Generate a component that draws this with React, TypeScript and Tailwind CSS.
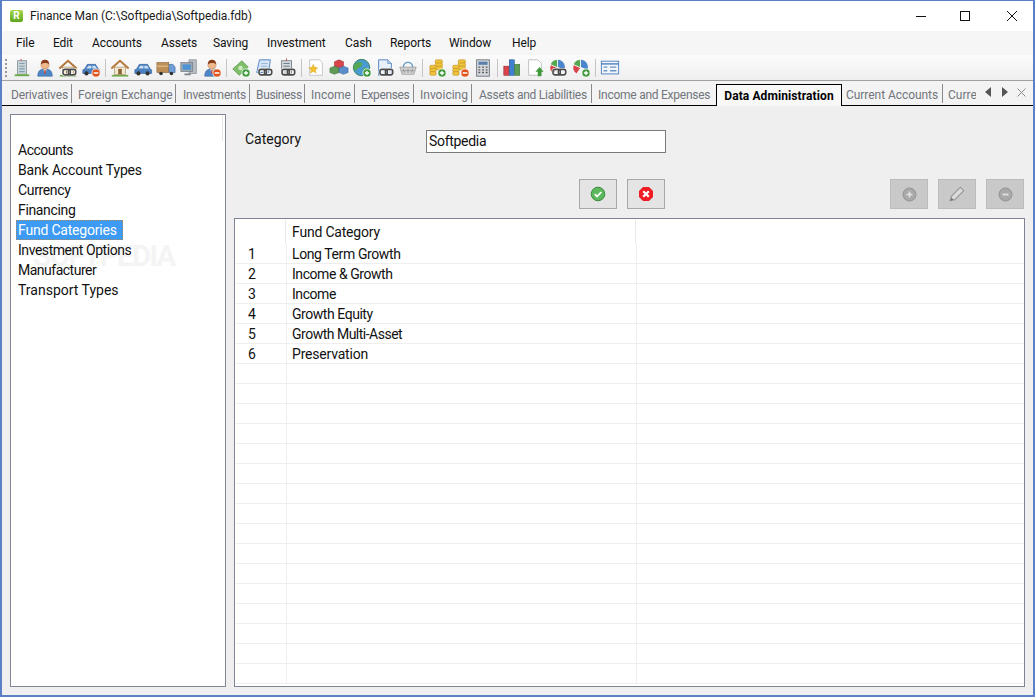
import React from "react";

const font = "font-['Roboto','Liberation_Sans',sans-serif]";

const menus = [
  { label: "File", w: "w-[37px]" },
  { label: "Edit", w: "w-[39px]" },
  { label: "Accounts", w: "w-[69px]" },
  { label: "Assets", w: "w-[52px]" },
  { label: "Saving", w: "w-[54px]" },
  { label: "Investment", w: "w-[78px]" },
  { label: "Cash", w: "w-[45px]" },
  { label: "Reports", w: "w-[59px]" },
  { label: "Window", w: "w-[63px]" },
  { label: "Help", w: "w-[40px]" },
];

const tabs = [
  { label: "Derivatives", w: "w-[67px] tracking-[-0.15px]" },
  { label: "Foreign Exchange", w: "w-[104px]" },
  { label: "Investments", w: "w-[74px] pl-[7px] tracking-[-0.25px]" },
  { label: "Business", w: "w-[55px] tracking-[-0.35px]" },
  { label: "Income", w: "w-[50px]" },
  { label: "Expenses", w: "w-[59px] tracking-[-0.35px]" },
  { label: "Invoicing", w: "w-[58px]" },
  { label: "Assets and Liabilities", w: "w-[120px] pl-[7px] tracking-[-0.25px]" },
];

const lists = [
  { label: "Accounts", t: "tracking-[-0.5px]" },
  { label: "Bank Account Types", t: "tracking-[-0.15px]" },
  { label: "Currency", t: "tracking-[-0.35px]" },
  { label: "Financing", t: "tracking-[-0.35px]" },
  { label: "Fund Categories", t: "tracking-[-0.2px]" },
  { label: "Investment Options", t: "tracking-[-0.45px]" },
  { label: "Manufacturer", t: "tracking-[-0.5px]" },
  { label: "Transport Types", t: "tracking-[0px]" },
];

const funds = [
  { label: "Long Term Growth", t: "tracking-[-0.4px]" },
  { label: "Income & Growth", t: "tracking-[-0.45px]" },
  { label: "Income", t: "tracking-[-0.45px]" },
  { label: "Growth Equity", t: "tracking-[-0.45px]" },
  { label: "Growth Multi-Asset", t: "tracking-[-0.5px]" },
  { label: "Preservation", t: "tracking-[-0.2px]" },
];

const rows = Array.from({ length: 22 }, (_, i) => i);

// little overlays used on the toolbar icons
function Plus() {
  return (
    <g>
      <circle cx="16.5" cy="16.5" r="4.5" fill="#3f9a3c" stroke="#fff" strokeWidth="0.8" />
      <path d="M14.2 16.5h4.6M16.5 14.2v4.6" stroke="#fff" strokeWidth="1.5" />
    </g>
  );
}

function Minus() {
  return (
    <g>
      <circle cx="16.5" cy="16.5" r="4.5" fill="#e2521a" stroke="#fff" strokeWidth="0.8" />
      <path d="M14 16.5h5" stroke="#fff" strokeWidth="1.7" />
    </g>
  );
}

function Chain() {
  return (
    <g fill="none">
      <rect x="5.5" y="12.5" width="8" height="6" rx="2.2" stroke="#fff" strokeWidth="3" />
      <rect x="11.5" y="12.5" width="8" height="6" rx="2.2" stroke="#fff" strokeWidth="3" />
      <rect x="5.5" y="12.5" width="8" height="6" rx="2.2" stroke="#4a4a4a" strokeWidth="1.8" />
      <rect x="11.5" y="12.5" width="8" height="6" rx="2.2" stroke="#4a4a4a" strokeWidth="1.8" />
    </g>
  );
}

function Building() {
  return (
    <g>
      <rect x="6" y="3" width="10" height="15" fill="#ccd6d8" stroke="#8b989b" />
      <path d="M8 6h6M8 9h6M8 12h6M8 15h6" stroke="#7d9db0" strokeWidth="1.2" />
      <path d="M10 3V1" stroke="#b44" />
      <path d="M3 19h16" stroke="#6aaa48" strokeWidth="2" />
    </g>
  );
}

function Person() {
  return (
    <g>
      <path d="M3 20c0-6 3-8 8-8s8 2 8 8z" fill="#4d86c8" stroke="#2d5a94" strokeWidth="0.6" />
      <path d="M9 12l2 5 2-5z" fill="#f0e6d8" />
      <path d="M10.400 13h1.200l.5 4h-2.200z" fill="#c0452a" />
      <circle cx="11" cy="7.5" r="4.5" fill="#eeb78c" stroke="#a9724a" strokeWidth="0.5" />
      <path d="M6.600 7c0-4 2-5 4.400-5s4.400 1 4.400 5c-2-2-6-2-8.800 0z" fill="#8a3d1d" />
    </g>
  );
}

function House() {
  return (
    <g>
      <rect x="5" y="10" width="12" height="8" fill="#f2e7cf" stroke="#a68a5b" strokeWidth="0.7" />
      <path d="M1.500 11.500L11 3l9.500 8.500" fill="none" stroke="#b5773a" strokeWidth="2.200" />
      <rect x="9" y="12" width="4" height="6" fill="#8a6236" />
      <path d="M2 19.500h18" stroke="#6aaa48" strokeWidth="1.800" />
    </g>
  );
}

function Car() {
  return (
    <g>
      <path d="M2 13l2-1 3-5h9l3 5 1.500 1v4h-18.500z" fill="#4a7fc0" stroke="#2d5a94" strokeWidth="0.6" />
      <path d="M8 8.500h3.500v3H6zM12.500 8.500H15.500l2 3h-5z" fill="#c9e0f2" />
      <circle cx="6" cy="17" r="2.300" fill="#333" />
      <circle cx="16" cy="17" r="2.300" fill="#333" />
    </g>
  );
}

function Truck() {
  return (
    <g>
      <rect x="1" y="5" width="13" height="11" fill="#bd8f57" stroke="#7d5c33" strokeWidth="0.6" />
      <path d="M1 9h13" stroke="#e0bd8b" strokeWidth="1.400" />
      <path d="M14.500 7h4l2.500 3v6h-6.500z" fill="#6f9fd4" stroke="#2d5a94" strokeWidth="0.6" />
      <circle cx="5.500" cy="17" r="2" fill="#333" />
      <circle cx="17" cy="17" r="2" fill="#333" />
    </g>
  );
}

function Computer() {
  return (
    <g>
      <rect x="11" y="2" width="8" height="15" fill="#b6bcc2" stroke="#7c848c" strokeWidth="0.7" />
      <rect x="2" y="5" width="13" height="10" fill="#9fa8b0" stroke="#6c747c" strokeWidth="0.7" />
      <rect x="4" y="7" width="9" height="6" fill="#4e94d4" />
      <path d="M6 18h7" stroke="#7c848c" strokeWidth="2" />
    </g>
  );
}

function Money() {
  return (
    <g>
      <path d="M2 12L12 3l7 7-10 9z" fill="#7fbf6a" stroke="#4a8c3c" strokeWidth="0.7" />
      <circle cx="10.500" cy="11" r="2.500" fill="#cfe9c0" />
    </g>
  );
}

function Scroll() {
  return (
    <g>
      <path d="M6 2h12l-2 14H3z" fill="#d6e6f6" stroke="#4a7fc0" />
      <path d="M8 6h7M7.500 9h7" stroke="#8fb2d8" />
    </g>
  );
}

function Form() {
  return (
    <g>
      <rect x="5" y="3" width="11" height="14" fill="#d5dade" stroke="#7c848c" />
      <path d="M7 6h7M7 9h7M7 12h7" stroke="#5e7284" />
      <path d="M10.500 3V0.500" stroke="#b44" />
    </g>
  );
}

function Note() {
  return (
    <g>
      <path d="M4 2h11l3 3v14H4z" fill="#fff" stroke="#c4c4c4" />
      <path d="M8 7l1.500 3.300 3.500.4-2.600 2.400.7 3.500L8 14.800 4.900 16.600l.7-3.500L3 10.700l3.500-.4z" fill="#f2c12e" stroke="#c8961a" strokeWidth="0.4" />
    </g>
  );
}

function Cubes() {
  return (
    <g>
      <path d="M11 2l5 2v5l-5 2-5-2V4z" fill="#d9434a" stroke="#8e2229" strokeWidth="0.5" />
      <path d="M6 9l5 2v5l-5 2-5-2v-5z" fill="#5f9a57" stroke="#376b31" strokeWidth="0.5" />
      <path d="M16 9l5 2v5l-5 2-5-2v-5z" fill="#5a8ecb" stroke="#2d5a94" strokeWidth="0.5" />
    </g>
  );
}

function Globe() {
  return (
    <g>
      <circle cx="10.500" cy="10.500" r="9" fill="#4b9bd1" stroke="#2f7f4f" />
      <path d="M4 6c3-2 6-2 7 0s-2 4-4 5-2 4-4 2-1-5 1-7zM13 11c2-1 4 0 4 2s-2 3-3 3-2-4-1-5z" fill="#54a84f" />
    </g>
  );
}

function Doc() {
  return (
    <g>
      <path d="M4 2h10l4 4v13H4z" fill="#e8f0fa" stroke="#4a7fc0" />
      <path d="M14 2v4h4" fill="#bcd3ec" stroke="#4a7fc0" strokeWidth="0.7" />
    </g>
  );
}

function Basket() {
  return (
    <g>
      <path d="M6 10c0-7 10-7 10 0" fill="none" stroke="#5c9dc4" strokeWidth="1.500" />
      <path d="M2 10h18l-2.500 8h-13z" fill="#d2d2d2" stroke="#8d8d8d" strokeWidth="0.7" />
      <path d="M6 11.500l1 5M11 11.500v5M16 11.500l-1 5M4 14h14" stroke="#8d8d8d" strokeWidth="0.8" />
    </g>
  );
}

function Coins() {
  return (
    <g fill="#f0c33c" stroke="#b98a1a" strokeWidth="0.6">
      <rect x="9" y="2" width="8" height="4" rx="1.500" />
      <rect x="9" y="5.500" width="8" height="4" rx="1.500" />
      <rect x="9" y="9" width="8" height="4" rx="1.500" />
      <rect x="3" y="8" width="7" height="4" rx="1.500" />
      <rect x="3" y="11.500" width="7" height="4" rx="1.500" />
      <rect x="3" y="15" width="7" height="4" rx="1.500" />
    </g>
  );
}

function Calculator() {
  return (
    <g>
      <rect x="4" y="2" width="14" height="18" fill="#d5d8dc" stroke="#6c747c" />
      <rect x="6" y="4" width="10" height="3.500" fill="#5a7fae" />
      <path d="M6 10h2M10 10h2M14 10h2M6 13h2M10 13h2M14 13h2M6 16h2M10 16h2M14 16h2" stroke="#555" strokeWidth="1.500" />
    </g>
  );
}

function Bars() {
  return (
    <g>
      <rect x="2" y="9" width="5.500" height="10" fill="#d9434a" stroke="#8e2229" strokeWidth="0.6" />
      <rect x="8" y="2" width="5.500" height="17" fill="#3f7fd0" stroke="#234f8e" strokeWidth="0.6" />
      <rect x="14" y="7" width="5.500" height="12" fill="#5a9e55" stroke="#376b31" strokeWidth="0.6" />
    </g>
  );
}

function DocUp() {
  return (
    <g>
      <path d="M4 2h10l4 4v13H4z" fill="#fff" stroke="#bdbdbd" />
      <path d="M16 10l4.500 5H18v5h-4v-5h-2.500z" fill="#3f9a3c" />
    </g>
  );
}

function Pie() {
  return (
    <g>
      <path d="M10 10L3 7a8 8 0 0 1 7-5z" fill="#54a84f" />
      <path d="M11 10V2a8 8 0 0 1 7 11z" fill="#4a86cc" />
      <path d="M10 11l-7-3a8 8 0 0 0 3 9z" fill="#d9434a" />
    </g>
  );
}

function Panel() {
  return (
    <g>
      <rect x="1.500" y="3.500" width="19" height="14" fill="#f2f6fb" stroke="#4a7fc0" />
      <path d="M1.500 6.500h19" stroke="#4a7fc0" strokeWidth="1.500" />
      <path d="M4 10h4M4 14h4M11 10h7M11 14h7" stroke="#6a94c8" strokeWidth="1.500" />
    </g>
  );
}

function Ico({ children }: { children: React.ReactNode }) {
  return (
    <div className="w-[23px] flex items-center justify-center">
      <svg width="20" height="20" viewBox="0 0 22 22">
        {children}
      </svg>
    </div>
  );
}

function Sep() {
  return (
    <div className="w-[6px] flex justify-center">
      <div className="w-px h-[18px] bg-[#c4c4c4]" />
    </div>
  );
}

function Toolbar() {
  return (
    <div className="h-[26px] shrink-0 border-b border-[#a0a0a0] bg-gradient-to-b from-[#fbfbfb] to-[#efefef] flex items-center">
      <div className="w-[5px] h-[18px] border-l-2 border-dotted border-[#9a9a9a] ml-[3px]" />
      <Ico><Building /></Ico>
      <Ico><Person /></Ico>
      <Ico><House /><Chain /></Ico>
      <Ico><Car /><Minus /></Ico>
      <Sep />
      <Ico><House /></Ico>
      <Ico><Car /></Ico>
      <Ico><Truck /></Ico>
      <Ico><Computer /></Ico>
      <Ico><Person /><Minus /></Ico>
      <Sep />
      <Ico><Money /><Plus /></Ico>
      <Ico><Scroll /><Chain /></Ico>
      <Ico><Form /><Chain /></Ico>
      <Sep />
      <Ico><Note /></Ico>
      <Ico><Cubes /></Ico>
      <Ico><Globe /><Plus /></Ico>
      <Ico><Doc /><Chain /></Ico>
      <Ico><Basket /></Ico>
      <Sep />
      <Ico><Coins /><Plus /></Ico>
      <Ico><Coins /><Minus /></Ico>
      <Ico><Calculator /></Ico>
      <Sep />
      <Ico><Bars /></Ico>
      <Ico><DocUp /></Ico>
      <Ico><Pie /><Chain /></Ico>
      <Ico><Pie /><Plus /></Ico>
      <Sep />
      <Ico><Panel /></Ico>
    </div>
  );
}

function TabBar() {
  return (
    <div className="h-[25px] shrink-0 border-b border-black bg-[#f3f3f3] flex text-[12px] text-[#71757c] pl-[3px] relative">
      {tabs.map((t) => (
        <div key={t.label} className={`${t.w} h-[19px] mt-[3px] pt-[3px] border-r border-[#8a8a8a] pl-[6px] flex items-center whitespace-nowrap`}>
          {t.label}
        </div>
      ))}
      <div className="w-[124px] h-[19px] mt-[3px] pt-[3px] pl-[6px] flex items-center whitespace-nowrap tracking-[-0.25px]">Income and Expenses</div>
      <div className="w-[126px] h-[22px] mt-[3px] -mb-px bg-[#f8f8f8] border border-b-0 border-black flex items-center justify-center font-bold text-black whitespace-nowrap tracking-[0.1px] z-10">
        Data Administration
      </div>
      <div className="w-[101px] h-[19px] mt-[3px] pt-[3px] border-r border-[#8a8a8a] pl-[4px] flex items-center whitespace-nowrap tracking-[-0.05px]">Current Accounts</div>
      <div className="w-[33px] h-[19px] mt-[3px] pt-[3px] pl-[5px] flex items-center overflow-hidden">Curre</div>
      <div className="flex items-center h-[20px] ml-[9px] gap-[9px] mt-[1px]">
        <svg width="7" height="10" viewBox="0 0 7 10"><path d="M6 0v10L0 5z" fill="#555" /></svg>
        <svg width="7" height="10" viewBox="0 0 7 10"><path d="M1 0v10l6-5z" fill="#555" /></svg>
        <svg width="9" height="9" viewBox="0 0 9 9"><path d="M0.500 0.500l8 8M8.500 0.500l-8 8" stroke="#8a8a8a" /></svg>
      </div>
    </div>
  );
}

function ActionBtn({ off, children }: { off?: boolean; children: React.ReactNode }) {
  return (
    <div className={off ? "w-[38px] h-[30px] border border-[#bcbcbc] bg-[#c9c9c9] flex items-center justify-center" : "w-[38px] h-[30px] border border-[#a8a8a8] bg-[#e4e4e4] flex items-center justify-center"}>
      {children}
    </div>
  );
}

export default function App() {
  return (
    <div className={`${font} w-[1035px] h-[697px] box-border border-2 border-t border-[#5b80c6] bg-[#efefef] flex flex-col text-black overflow-hidden`}>
      {/* title bar */}
      <div className="h-[30px] shrink-0 bg-white flex items-center relative">
        <div className="ml-[8px] w-[13px] h-[12px] rounded-[2px] bg-gradient-to-b from-[#a6d84c] to-[#5ea51c] text-white text-[10px] font-bold leading-[12px] text-center">R</div>
        <span className="ml-[7px] text-[12px] text-[#1a1a1a] tracking-[-0.05px]">Finance Man (C:\Softpedia\Softpedia.fdb)</span>
        <div className="ml-auto flex items-center">
          <svg width="12" height="12" viewBox="0 0 12 12" className="mr-[32px]"><path d="M1 6.500h10" stroke="#111" /></svg>
          <svg width="12" height="12" viewBox="0 0 12 12" className="mr-[35px]"><rect x="1.500" y="1.500" width="9" height="9" fill="none" stroke="#111" /></svg>
          <svg width="12" height="12" viewBox="0 0 12 12" className="mr-[15px]"><path d="M1 1l10 10M11 1L1 11" stroke="#111" /></svg>
        </div>
      </div>

      {/* menu */}
      <div className="h-[24px] shrink-0 bg-[#f6f6f6] flex items-center pl-[14px] text-[12px] text-[#111] tracking-[-0.1px]">
        {menus.map((m) => (
          <span key={m.label} className={m.w}>{m.label}</span>
        ))}
      </div>

      <Toolbar />
      <TabBar />

      {/* body */}
      <div className="flex-1 min-h-0 flex gap-[8px] pt-[8px] px-[8px] pb-[8px]">
        <div className="w-[216px] shrink-0 bg-white border border-[#7f8496] relative pt-[25px] pl-[5px] text-[14px] leading-[20px]">
          <div className="absolute left-[22px] top-[121px] text-[30px] leading-[40px] font-bold tracking-[-2px] text-[#f4f4f4]">SOFTPEDIA</div>
          <div className="absolute right-[2px] top-0 w-px h-[26px] bg-[#e4e4e4]" />
          {lists.map((l) =>
            l.label === "Fund Categories" ? (
              <div key={l.label} className={`${l.t} relative w-[107px] h-[20px] bg-[#3d9bf5] border border-dotted border-[#a98a60] text-white pl-px leading-[18px] whitespace-nowrap`}>
                {l.label}
              </div>
            ) : (
              <div key={l.label} className={`${l.t} relative h-[20px] pl-[2px] text-[#111]`}>
                {l.label}
              </div>
            )
          )}
        </div>

        <div className="flex-1 min-w-0 flex flex-col">
          <div className="flex items-center pt-[16px] h-[39px] shrink-0">
            <label className="ml-[11px] w-[181px] text-[14px] -mt-[4px] text-[#111]">Category</label>
            <div className="w-[240px] h-[23px] bg-white border border-[#7a7a7a] pl-[2px] text-[14px] leading-[21px] tracking-[-0.3px] text-[#111]">Softpedia</div>
          </div>

          <div className="flex mt-[26px] h-[30px] shrink-0 pr-px">
            <div className="ml-[345px] flex gap-[10px]">
              <ActionBtn>
                <svg width="16" height="16" viewBox="0 0 16 16">
                  <circle cx="8" cy="8" r="6.800" fill="#5cb85c" stroke="#3a8a3a" />
                  <path d="M4.800 8.200l2.300 2.300 4.200-4.500" fill="none" stroke="#fff" strokeWidth="1.800" />
                </svg>
              </ActionBtn>
              <ActionBtn>
                <svg width="16" height="16" viewBox="0 0 16 16">
                  <path d="M5 1h6l4 4v6l-4 4H5l-4-4V5z" fill="#f01c24" />
                  <path d="M5.200 5.200l5.600 5.600M10.800 5.200l-5.600 5.600" stroke="#fff" strokeWidth="2.200" />
                </svg>
              </ActionBtn>
            </div>
            <div className="ml-auto flex gap-[10px]">
              <ActionBtn off>
                <svg width="15" height="15" viewBox="0 0 15 15">
                  <circle cx="7.500" cy="7.500" r="6.500" fill="#a9a9a9" stroke="#949494" />
                  <path d="M4.500 7.500h6M7.500 4.500v6" stroke="#e2e2e2" strokeWidth="1.600" />
                </svg>
              </ActionBtn>
              <ActionBtn off>
                <svg width="18" height="18" viewBox="0 0 16 16">
                  <path d="M2 14l1-4 8-8 3 3-8 8z" fill="#dcdcdc" stroke="#9a9a9a" />
                  <path d="M2 14l1-3 2 2z" fill="#777" />
                </svg>
              </ActionBtn>
              <ActionBtn off>
                <svg width="15" height="15" viewBox="0 0 15 15">
                  <circle cx="7.500" cy="7.500" r="6.500" fill="#a9a9a9" stroke="#949494" />
                  <path d="M4.500 7.500h6" stroke="#e2e2e2" strokeWidth="1.800" />
                </svg>
              </ActionBtn>
            </div>
          </div>

          <div className="mt-[9px] flex-1 min-h-0 bg-white border border-[#7f8496] overflow-hidden pl-px text-[14px] text-[#111]">
            <div className="flex h-[25px]">
              <div className="w-[50px] border-r border-[#e8e8e8] mt-[1px]" />
              <div className="w-[350px] border-r border-[#e8e8e8] pl-[6px] leading-[25px] mt-[1px] tracking-[-0.2px]">Fund Category</div>
            </div>
            {rows.map((i) => (
              <div key={i} className="flex h-[20px] border-b border-[#eeeeee] leading-[20px]">
                <div className="w-[51px] shrink-0 border-r border-[#eeeeee] pl-[12px]">{funds[i] ? i + 1 : ""}</div>
                <div className={`${funds[i]?.t ?? ""} w-[350px] shrink-0 border-r border-[#eeeeee] pl-[5px]`}>{funds[i]?.label ?? ""}</div>
              </div>
            ))}
          </div>
        </div>
      </div>
    </div>
  );
}
